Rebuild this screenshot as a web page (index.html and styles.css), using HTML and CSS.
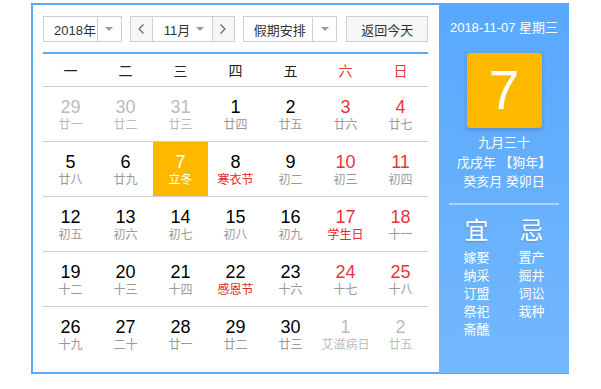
FILE: index.html
```html
<!DOCTYPE html>
<html lang="zh-CN">
<head>
<meta charset="utf-8">
<title>万年历</title>
<link rel="stylesheet" href="styles.css">
</head>
<body>
<div class="cal">
  <div class="main">
    <div class="toolbar">
      <div class="sel sel-year">
        <span class="sel-text">2018年</span>
        <span class="sel-arrow"><i class="tri"></i></span>
      </div>
      <div class="month-group">
        <button class="nav nav-prev"><svg width="8" height="12" viewBox="0 0 8 12"><polyline points="6.5,1.5 2,6 6.5,10.5" fill="none" stroke="#666" stroke-width="1.2"/></svg></button>
        <div class="sel sel-month">
          <span class="sel-text">11月</span>
          <i class="tri"></i>
        </div>
        <button class="nav nav-next"><svg width="8" height="12" viewBox="0 0 8 12"><polyline points="1.5,1.5 6,6 1.5,10.5" fill="none" stroke="#666" stroke-width="1.2"/></svg></button>
      </div>
      <div class="sel sel-holiday">
        <span class="sel-text">假期安排</span>
        <span class="sel-arrow"><i class="tri"></i></span>
      </div>
      <button class="today">返回今天</button>
    </div>
    <div class="rule"></div>
    <div class="week-head">
      <span>一</span><span>二</span><span>三</span><span>四</span><span>五</span><span class="we">六</span><span class="we">日</span>
    </div>
    <div class="weeks">
      <div class="week">
        <div class="day other"><b>29</b><i>廿一</i></div>
        <div class="day other"><b>30</b><i>廿二</i></div>
        <div class="day other"><b>31</b><i>廿三</i></div>
        <div class="day"><b>1</b><i>廿四</i></div>
        <div class="day"><b>2</b><i>廿五</i></div>
        <div class="day we"><b>3</b><i>廿六</i></div>
        <div class="day we"><b>4</b><i>廿七</i></div>
      </div>
      <div class="week">
        <div class="day"><b>5</b><i>廿八</i></div>
        <div class="day"><b>6</b><i>廿九</i></div>
        <div class="day cur"><b>7</b><i>立冬</i></div>
        <div class="day fest"><b>8</b><i>寒衣节</i></div>
        <div class="day"><b>9</b><i>初二</i></div>
        <div class="day we"><b>10</b><i>初三</i></div>
        <div class="day we"><b>11</b><i>初四</i></div>
      </div>
      <div class="week">
        <div class="day"><b>12</b><i>初五</i></div>
        <div class="day"><b>13</b><i>初六</i></div>
        <div class="day"><b>14</b><i>初七</i></div>
        <div class="day"><b>15</b><i>初八</i></div>
        <div class="day"><b>16</b><i>初九</i></div>
        <div class="day we fest"><b>17</b><i>学生日</i></div>
        <div class="day we"><b>18</b><i>十一</i></div>
      </div>
      <div class="week">
        <div class="day"><b>19</b><i>十二</i></div>
        <div class="day"><b>20</b><i>十三</i></div>
        <div class="day"><b>21</b><i>十四</i></div>
        <div class="day fest"><b>22</b><i>感恩节</i></div>
        <div class="day"><b>23</b><i>十六</i></div>
        <div class="day we"><b>24</b><i>十七</i></div>
        <div class="day we"><b>25</b><i>十八</i></div>
      </div>
      <div class="week">
        <div class="day"><b>26</b><i>十九</i></div>
        <div class="day"><b>27</b><i>二十</i></div>
        <div class="day"><b>28</b><i>廿一</i></div>
        <div class="day"><b>29</b><i>廿二</i></div>
        <div class="day"><b>30</b><i>廿三</i></div>
        <div class="day other"><b>1</b><i>艾滋病日</i></div>
        <div class="day other"><b>2</b><i>廿五</i></div>
      </div>
    </div>
  </div>
  <div class="side">
    <div class="side-date">2018-11-07 星期三</div>
    <div class="big-day">7</div>
    <div class="lunar">
      <div>九月三十</div>
      <div>戊戌年 【狗年】</div>
      <div>癸亥月 癸卯日</div>
    </div>
    <div class="side-rule"></div>
    <div class="yiji">
      <div class="yj-col">
        <div class="yj-title">宜</div>
        <div>嫁娶</div><div>纳采</div><div>订盟</div><div>祭祀</div><div>斋醮</div>
      </div>
      <div class="yj-col">
        <div class="yj-title">忌</div>
        <div>置产</div><div>掘井</div><div>词讼</div><div>栽种</div>
      </div>
    </div>
  </div>
</div>
</body>
</html>
```
FILE: styles.css
```css
* { box-sizing: border-box; }
html, body { margin: 0; padding: 0; background: #fff; }
body {
  font-family: "Liberation Sans", "Noto Sans CJK SC", sans-serif;
  color: #333;
}
.cal {
  display: flex;
  width: 538px;
  margin: 3px 0 0 31px;
  border: 2px solid #5aaafb;
  border-right: none;
}
.main {
  width: 406px;
  padding: 11px 11px 11px 10px;
}
.toolbar {
  display: flex;
  height: 26px;
  font-size: 13px;
}
.sel {
  display: flex;
  align-items: center;
  height: 26px;
  border: 1px solid #cfcfcf;
  background: #fff;
  color: #333;
}
.sel-text { flex: 1; padding-left: 10px; white-space: nowrap; }
.sel-arrow {
  width: 24px;
  height: 100%;
  border-left: 1px solid #cfcfcf;
  display: flex;
  align-items: center;
  justify-content: center;
}
.tri {
  display: block;
  width: 0;
  height: 0;
  border-style: solid;
  border-width: 4px 4px 0 4px;
  border-color: #999 transparent transparent transparent;
}
.sel-year { width: 80px; }
.month-group { display: flex; margin-left: 8px; }
.nav {
  width: 23px;
  height: 26px;
  padding: 0;
  border: 1px solid #cfcfcf;
  background: #f6f6f6;
  display: flex;
  align-items: center;
  justify-content: center;
}
.nav-next { margin-left: -1px; }
.sel-month {
  width: 61px;
  margin-left: -1px;
  padding-right: 8px;
}
.sel-month .sel-text { padding-left: 11px; }
.sel-holiday { width: 96px; margin-left: 8px; }
.sel-holiday .sel-text { padding-left: 10px; }
.today {
  margin-left: 9px;
  width: 83px;
  height: 26px;
  padding: 0;
  border: 1px solid #cfcfcf;
  background: #f6f6f6;
  font: inherit;
  font-size: 13px;
  color: #333;
}
.rule {
  margin-top: 10px;
  height: 2px;
  width: 385px;
  background: #5aaafb;
}
.week-head {
  display: grid;
  grid-template-columns: repeat(7, 55px);
  height: 32px;
  align-items: center;
  text-align: center;
  font-size: 14px;
  color: #222;
}
.week-head .we { color: #e33a3a; }
.week {
  display: grid;
  grid-template-columns: repeat(7, 55px);
  border-top: 1px solid #cccccc;
  height: 55px;
}
.day {
  height: 54px;
  padding-top: 10px;
  text-align: center;
}
.day b {
  display: block;
  font-weight: normal;
  font-size: 18px;
  line-height: 20px;
  color: #000;
}
.day i {
  display: block;
  font-style: normal;
  font-size: 12px;
  line-height: 16px;
  color: #999;
  white-space: nowrap;
}
.day.we b { color: #e3363c; }
.day.fest i { color: #e3262d; }
.day.other b { color: #bbb; }
.day.other i { color: #bbb; }
.day.cur { background: #ffb800; }
.day.cur b, .day.cur i { color: #fff; }

.side {
  width: 130px;
  background: linear-gradient(#57a8fd, #74b8fd);
  color: #fff;
  text-align: center;
  padding-top: 14px;
  margin-top: -1px;
  margin-bottom: -1px;
}
.side-date { font-size: 13px; line-height: 20px; }
.big-day {
  width: 75px;
  height: 75px;
  margin: 15px auto 0;
  background: #ffb800;
  border-radius: 3px;
  box-shadow: 0 2px 4px rgba(0,0,0,0.18);
  font-size: 55px;
  line-height: 75px;
}
.lunar {
  margin-top: 5px;
  font-size: 13px;
  line-height: 19.5px;
}
.side-rule {
  width: 110px;
  height: 2px;
  margin: 11px auto 0;
  background: rgba(255,255,255,0.45);
}
.yiji {
  display: flex;
  justify-content: center;
  margin-top: 11px;
  font-size: 13px;
  line-height: 18px;
}
.yj-col { width: 55px; }
.yj-title {
  font-size: 24px;
  line-height: 30px;
  margin-bottom: 3px;
  text-shadow: 0 1px 2px rgba(0,0,0,0.2);
}
```
